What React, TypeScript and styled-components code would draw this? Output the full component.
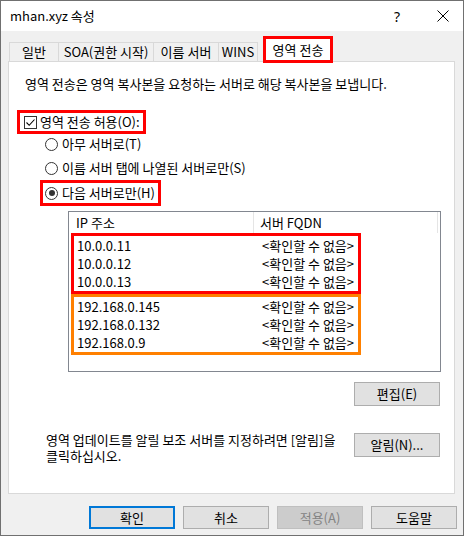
import React from 'react';
import styled, { createGlobalStyle } from 'styled-components';

const GlobalStyle = createGlobalStyle`
  html, body {
    margin: 0;
    padding: 0;
    background: #ffffff;
  }
  body {
    font-family: "Noto Sans CJK KR", "Noto Sans", sans-serif;
    font-size: 13px;
    color: #000000;
  }
  * {
    box-sizing: border-box;
  }
`;

const Window = styled.div`
  width: 464px;
  height: 536px;
  border: 1px solid #707070;
  background: #f0f0f0;
  display: flex;
  flex-direction: column;
`;

const TitleBar = styled.div`
  height: 30px;
  background: #ffffff;
  display: flex;
  align-items: center;
  padding-left: 9px;
`;

const Title = styled.span`
  flex: 1;
  line-height: 16px;
`;

const HelpButton = styled.div`
  width: 50px;
  height: 30px;
  display: flex;
  align-items: center;
  justify-content: center;
  font-family: "Noto Sans", sans-serif;
  font-size: 14px;
`;

const CloseButton = styled.div`
  width: 41px;
  height: 30px;
  display: flex;
  align-items: center;
  justify-content: center;
`;

const Body = styled.div`
  padding-left: 7px;
  display: flex;
  flex-direction: column;
`;

const TabRow = styled.div`
  margin-top: 5px;
  height: 25px;
  padding-left: 1px;
  display: flex;
  align-items: flex-end;
`;

const Tab = styled.div<{ $w: number; $last?: boolean }>`
  width: ${(p) => p.$w}px;
  height: 19px;
  border: 1px solid #d9d9d9;
  border-bottom: none;
  border-right: ${(p) => (p.$last ? '1px solid #d9d9d9' : 'none')};
  background: #f0f0f0;
  display: flex;
  align-items: center;
  justify-content: center;
  line-height: 16px;
  white-space: nowrap;
`;

const ActiveTab = styled.div`
  position: relative;
  z-index: 1;
  margin-left: 5px;
  margin-bottom: -2px;
  width: 70px;
  height: 27px;
  border: 3px solid #ff0000;
  background: #ffffff;
  display: flex;
  align-items: center;
  justify-content: center;
  line-height: 16px;
  white-space: nowrap;
`;

const Panel = styled.div`
  width: 447px;
  height: 433px;
  border: 1px solid #d9d9d9;
  background: #ffffff;
  display: flex;
  flex-direction: column;
  align-items: flex-start;
`;

const Description = styled.div`
  margin: 14px 0 0 16px;
  line-height: 16px;
  white-space: nowrap;
`;

const Mark = styled.div<{ $color: string; $top: number; $left: number; $h: number; $pad: number }>`
  margin-top: ${(p) => p.$top}px;
  margin-left: ${(p) => p.$left}px;
  height: ${(p) => p.$h}px;
  border: 3px solid ${(p) => p.$color};
  padding: 0 3px 0 ${(p) => p.$pad}px;
  display: flex;
  align-items: center;
`;

const Option = styled.label<{ $top?: number; $left?: number }>`
  margin-top: ${(p) => p.$top ?? 0}px;
  margin-left: ${(p) => p.$left ?? 0}px;
  height: 16px;
  display: flex;
  align-items: center;
  gap: 4px;
  line-height: 16px;
  white-space: nowrap;
`;

const CheckBox = styled.span`
  width: 13px;
  height: 13px;
  border: 1px solid #333333;
  background: #ffffff;
  display: flex;
  align-items: center;
  justify-content: center;
  margin-right: -1px;
`;

const Radio = styled.span<{ $on?: boolean }>`
  width: 13px;
  height: 13px;
  border-radius: 50%;
  border: 1px solid #333333;
  background: #ffffff;
  display: flex;
  align-items: center;
  justify-content: center;

  &::after {
    content: '';
    width: 6px;
    height: 6px;
    border-radius: 50%;
    background: ${(p) => (p.$on ? '#333333' : 'transparent')};
  }
`;

const ListBox = styled.div`
  margin: 5px 0 0 59px;
  width: 373px;
  height: 161px;
  border: 1px solid #828790;
  background: #ffffff;
`;

const Header = styled.div`
  height: 21px;
  display: flex;
`;

const HeaderCell = styled.div<{ $w: number; $pad: number }>`
  width: ${(p) => p.$w}px;
  height: 21px;
  padding: 3px 0 0 ${(p) => p.$pad}px;
  border-right: 1px solid #e5e5e5;
  line-height: 16px;
  white-space: nowrap;
`;

const RowGroup = styled.div<{ $color: string }>`
  margin-left: 2px;
  width: 290px;
  border: 3px solid ${(p) => p.$color};
  padding-top: 1px;
`;

const Row = styled.div`
  height: 18px;
  display: flex;
  align-items: center;
  line-height: 18px;
  white-space: nowrap;
`;

const IpCell = styled.span`
  width: 188px;
  padding-left: 3px;
`;

const FqdnCell = styled.span`
  flex: 1;
`;

const ButtonRow = styled.div`
  align-self: stretch;
  margin-top: 10px;
  padding-right: 14px;
  display: flex;
  justify-content: flex-end;
`;

const NotifyRow = styled.div`
  align-self: stretch;
  margin-top: 26px;
  padding: 0 14px 0 37px;
  display: flex;
  justify-content: space-between;
  align-items: flex-start;
`;

const NotifyText = styled.div`
  line-height: 16px;
  white-space: nowrap;
`;

const Button = styled.div<{ $h?: number; $top?: number; $default?: boolean; $disabled?: boolean }>`
  width: 86px;
  height: ${(p) => p.$h ?? 24}px;
  margin-top: ${(p) => p.$top ?? 0}px;
  border: ${(p) =>
    p.$default ? '2px solid #0078d7' : p.$disabled ? '1px solid #bfbfbf' : '1px solid #adadad'};
  background: ${(p) => (p.$disabled ? '#cccccc' : '#e1e1e1')};
  color: ${(p) => (p.$disabled ? '#838383' : '#000000')};
  display: flex;
  align-items: center;
  justify-content: center;
  line-height: 16px;
  white-space: nowrap;
`;

const Footer = styled.div`
  margin-top: 12px;
  padding-right: 6px;
  display: flex;
  justify-content: flex-end;
  gap: 8px;
`;

const servers = [
  { group: '#ff0000', ips: ['10.0.0.11', '10.0.0.12', '10.0.0.13'] },
  { group: '#ff8000', ips: ['192.168.0.145', '192.168.0.132', '192.168.0.9'] },
];

export default function App() {
  return (
    <>
      <GlobalStyle />
      <Window>
        <TitleBar>
          <Title>mhan.xyz 속성</Title>
          <HelpButton>?</HelpButton>
          <CloseButton>
            <svg width="12" height="12" viewBox="0 0 12 12">
              <path d="M0.5 0.5 L11.5 11.5 M11.5 0.5 L0.5 11.5" stroke="#000" strokeWidth="1" fill="none" />
            </svg>
          </CloseButton>
        </TitleBar>
        <Body>
          <TabRow>
            <Tab $w={49}>일반</Tab>
            <Tab $w={95}>SOA(권한 시작)</Tab>
            <Tab $w={65}>이름 서버</Tab>
            <Tab $w={40} $last>WINS</Tab>
            <ActiveTab>영역 전송</ActiveTab>
          </TabRow>
          <Panel>
            <Description>영역 전송은 영역 복사본을 요청하는 서버로 해당 복사본을 보냅니다.</Description>
            <Mark $color="#ff0000" $top={18} $left={8} $h={24} $pad={4}>
              <Option>
                <CheckBox>
                  <svg width="11" height="11" viewBox="0 0 11 11">
                    <path d="M1.5 5.5 L4.2 8.3 L9.5 2.5" stroke="#000" strokeWidth="1.1" fill="none" />
                  </svg>
                </CheckBox>
                영역 전송 허용(O):
              </Option>
            </Mark>
            <Option $top={2} $left={36}>
              <Radio />
              아무 서버로(T)
            </Option>
            <Option $top={8} $left={36}>
              <Radio />
              이름 서버 탭에 나열된 서버로만(S)
            </Option>
            <Mark $color="#ff0000" $top={4} $left={31} $h={26} $pad={2}>
              <Option>
                <Radio $on />
                다음 서버로만(H)
              </Option>
            </Mark>
            <ListBox>
              <Header>
                <HeaderCell $w={185} $pad={7}>IP 주소</HeaderCell>
                <HeaderCell $w={184} $pad={6}>서버 FQDN</HeaderCell>
              </Header>
              {servers.map((g) => (
                <RowGroup key={g.group} $color={g.group}>
                  {g.ips.map((ip) => (
                    <Row key={ip}>
                      <IpCell>{ip}</IpCell>
                      <FqdnCell>&lt;확인할 수 없음&gt;</FqdnCell>
                    </Row>
                  ))}
                </RowGroup>
              ))}
            </ListBox>
            <ButtonRow>
              <Button>편집(E)</Button>
            </ButtonRow>
            <NotifyRow>
              <NotifyText>
                영역 업데이트를 알릴 보조 서버를 지정하려면 [알림]을
                <br />
                클릭하십시오.
              </NotifyText>
              <Button $top={1}>알림(N)...</Button>
            </NotifyRow>
          </Panel>
          <Footer>
            <Button $h={23} $default>확인</Button>
            <Button $h={23}>취소</Button>
            <Button $h={23} $disabled>적용(A)</Button>
            <Button $h={23}>도움말</Button>
          </Footer>
        </Body>
      </Window>
    </>
  );
}
